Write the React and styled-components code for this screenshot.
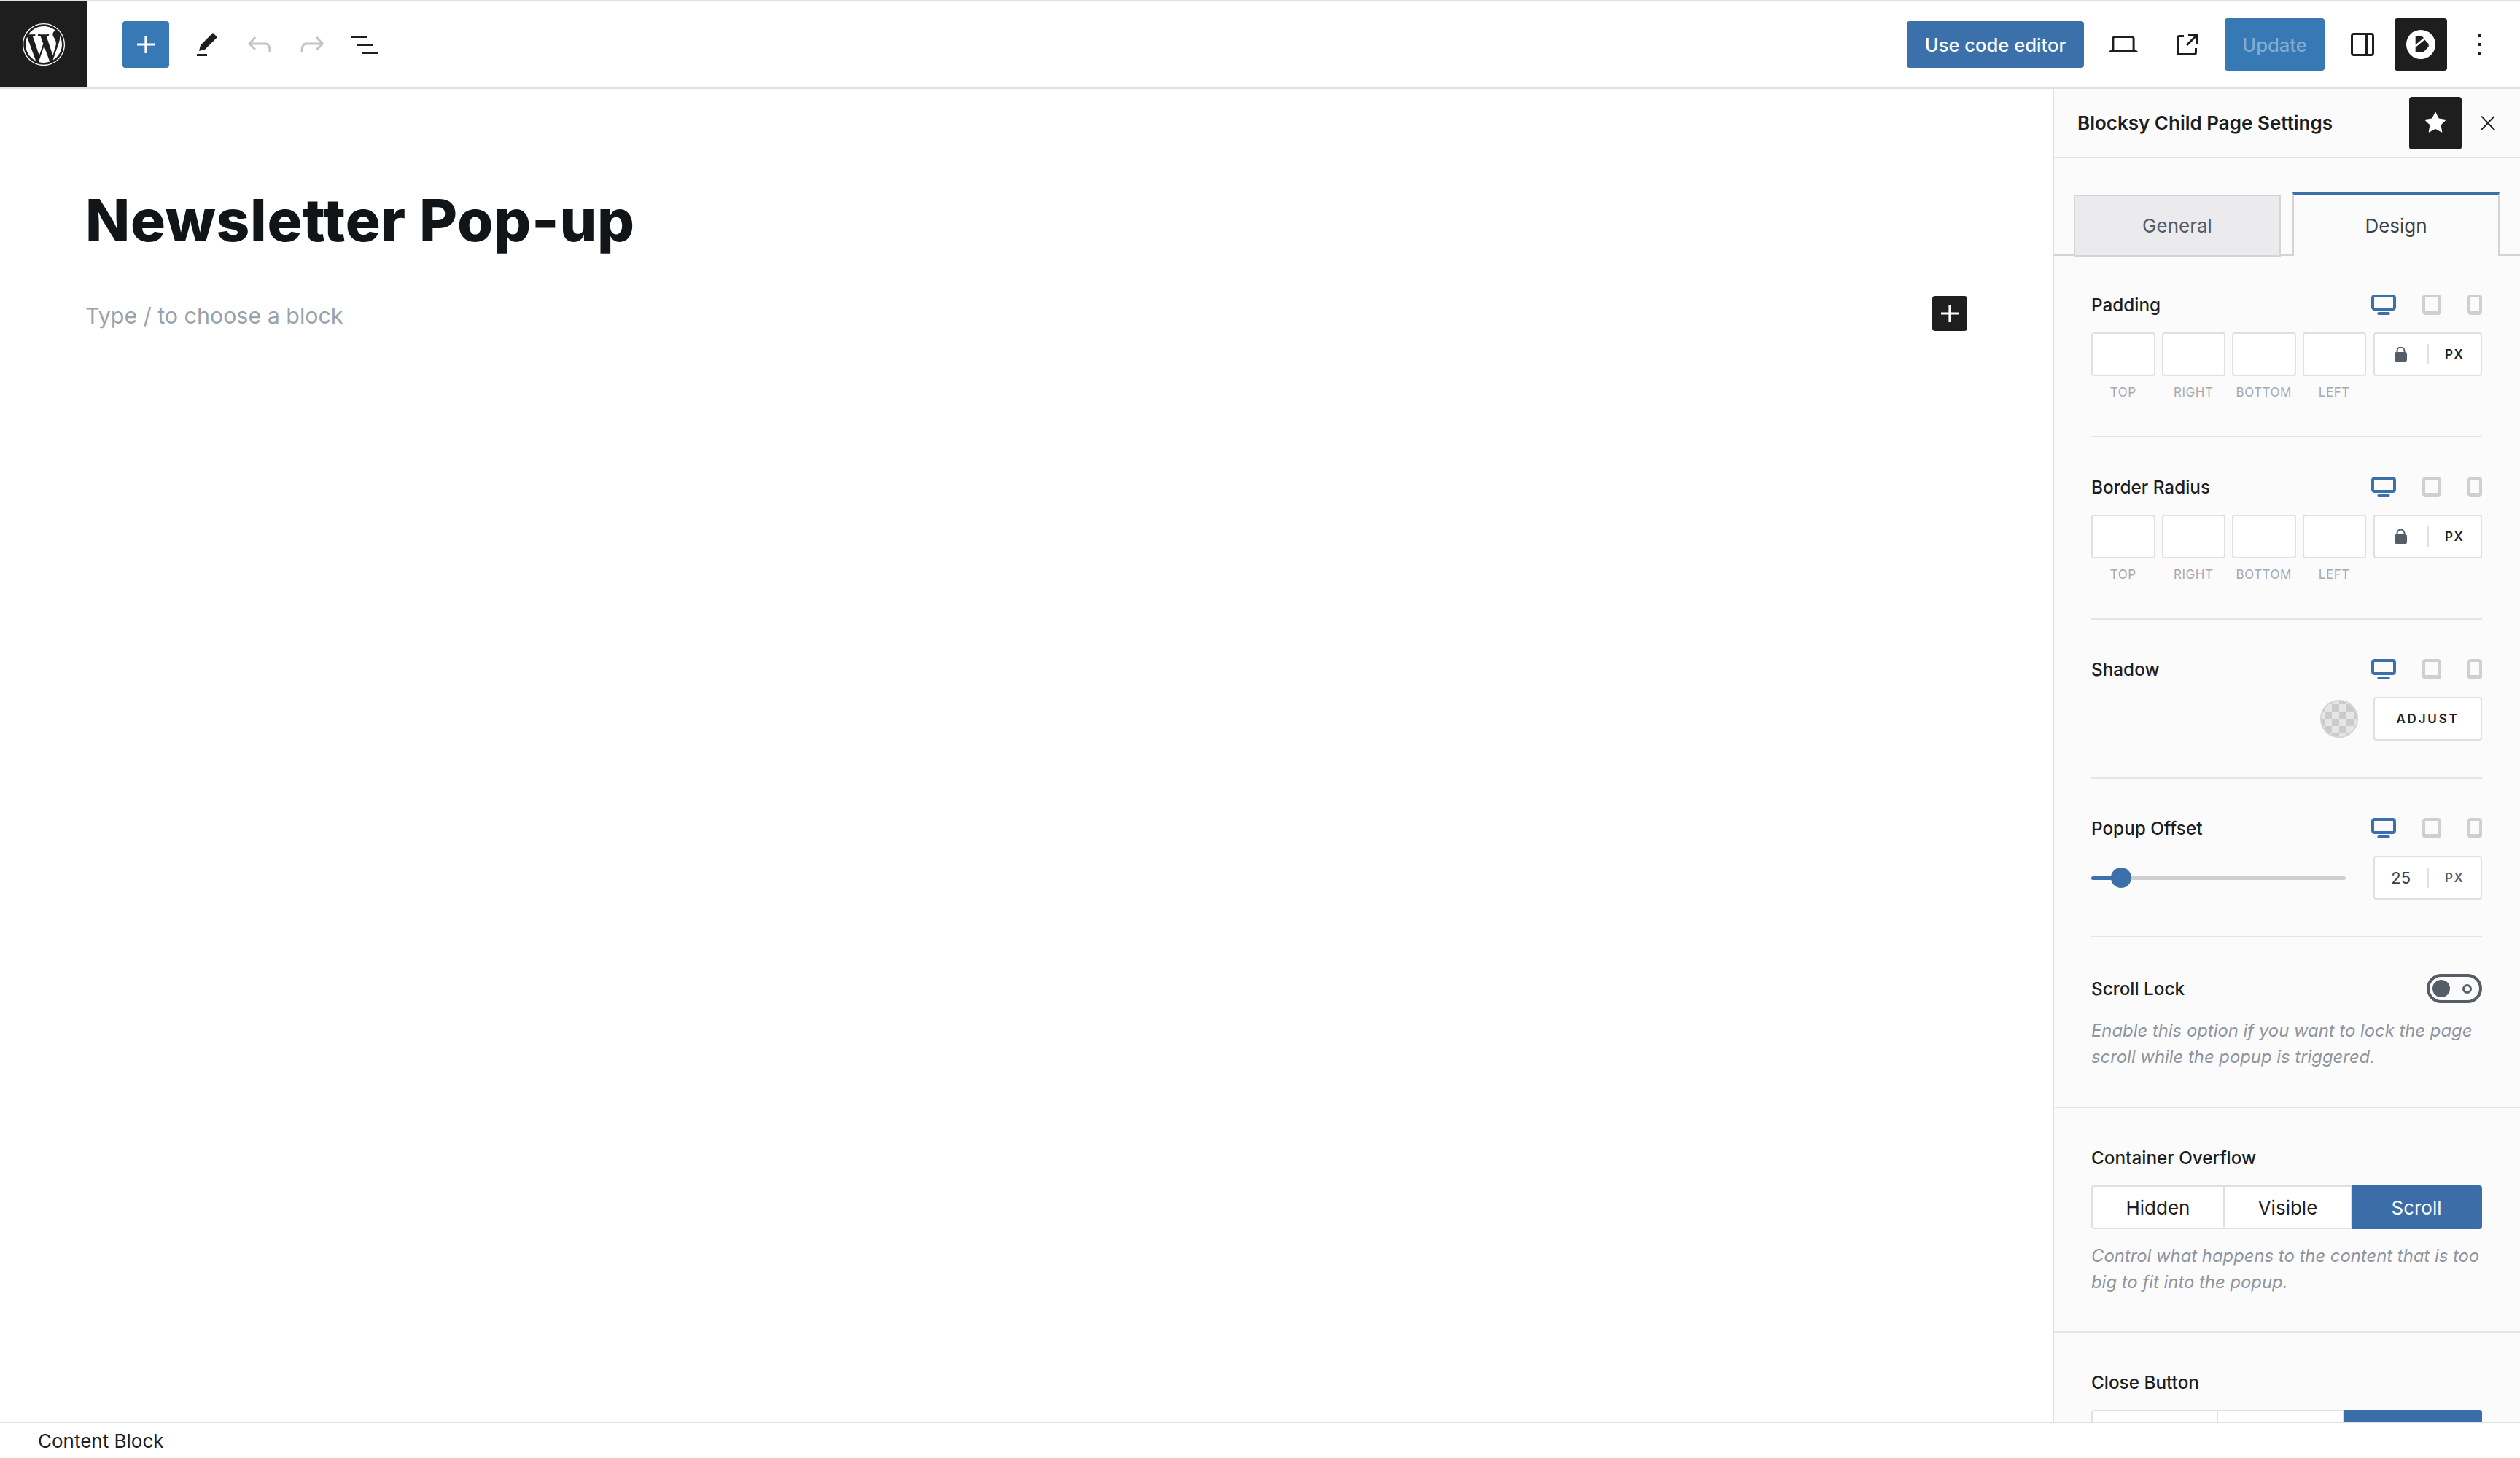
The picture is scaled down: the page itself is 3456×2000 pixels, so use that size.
import React from "react";
import styled, { createGlobalStyle } from "styled-components";
import { FaWordpress } from "react-icons/fa";

const GlobalStyle = createGlobalStyle`
	html, body {
		margin: 0;
		padding: 0;
		background: #fff;
		overflow: hidden;
	}
	* {
		box-sizing: border-box;
	}
	body {
		font-family: Inter, "Liberation Sans", sans-serif;
		color: #1e1e1e;
	}
`;

const Page = styled.div`
	display: flex;
	flex-direction: column;
	width: 3456px;
	height: 2000px;
	overflow: hidden;
`;

/* top toolbar */
const TopBar = styled.header`
	display: flex;
	align-items: center;
	flex: none;
	height: 122px;
	background: #fff;
	border-top: 2px solid #e0e0e0;
	border-bottom: 2px solid #e0e0e0;
`;

const LogoBlock = styled.div`
	display: flex;
	align-items: center;
	justify-content: center;
	width: 120px;
	height: 100%;
	background: #1e1e1e;
	color: #fff;
`;

const ToolGroup = styled.div`
	display: flex;
	align-items: center;
	margin-left: ${(p) => (p.$right ? "auto" : "48px")};
	padding-right: ${(p) => (p.$right ? "32px" : "0")};
`;

const IconButton = styled.div`
	display: flex;
	align-items: center;
	justify-content: center;
	flex: none;
	width: 48px;
	height: 48px;
	margin-left: ${(p) => p.$ml || 0}px;
	color: ${(p) => (p.$muted ? "#c4c4c4" : "#1e1e1e")};
`;

const InserterButton = styled.div`
	display: flex;
	align-items: center;
	justify-content: center;
	width: 64px;
	height: 64px;
	border-radius: 4px;
	background: #3679b5;
	color: #fff;
`;

const CodeEditorButton = styled.div`
	display: flex;
	align-items: center;
	justify-content: center;
	width: 243px;
	height: 64px;
	border-radius: 4px;
	background: #3c70ab;
	color: #fff;
	font-size: 25.6px;
	font-weight: 500;
`;

const UpdateButton = styled.div`
	display: flex;
	align-items: center;
	justify-content: center;
	width: 137px;
	height: 72px;
	margin-left: 27px;
	border-radius: 4px;
	background: #3679b5;
	color: rgba(255, 255, 255, 0.4);
	font-size: 25.6px;
	font-weight: 500;
`;

const DarkSquare = styled.div`
	display: flex;
	align-items: center;
	justify-content: center;
	flex: none;
	width: 72px;
	height: 72px;
	margin-left: ${(p) => p.$ml || 0}px;
	border-radius: 4px;
	background: #1e1e1e;
	color: #fff;
`;

/* body */
const Main = styled.div`
	display: flex;
	flex: none;
	height: 1828px;
`;

const Editor = styled.main`
	flex: 1;
	padding: 130px 117px 0 117px;
	background: #fff;
`;

const PostTitle = styled.h1`
	margin: 0;
	font-size: 80px;
	line-height: 100px;
	font-weight: 800;
	letter-spacing: 0.7px;
	color: #111518;
`;

const BlockRow = styled.div`
	display: flex;
	align-items: center;
	justify-content: space-between;
	margin-top: 54px;
`;

const Placeholder = styled.div`
	padding-top: 6px;
	font-size: 30.4px;
	line-height: 42px;
	color: #9aa3ad;
`;

const BlockPlus = styled.div`
	display: flex;
	align-items: center;
	justify-content: center;
	width: 48px;
	height: 48px;
	border-radius: 4px;
	background: #1e1e1e;
	color: #fff;
`;

/* settings sidebar */
const Sidebar = styled.aside`
	flex: none;
	width: 641px;
	height: 100%;
	overflow: hidden;
	background: #fbfbfc;
	border-left: 2px solid #e0e0e0;
`;

const SidebarHeader = styled.div`
	display: flex;
	align-items: center;
	height: 95px;
	padding: 0 20px 0 32px;
	border-bottom: 2px solid #e0e0e0;
`;

const SidebarTitle = styled.div`
	flex: 1;
	font-size: 26px;
	font-weight: 600;
`;

const TabRow = styled.div`
	display: flex;
	gap: 16px;
	height: 134px;
	padding: 47px 0 0 27px;
	border-bottom: 2px solid #d3d4d6;
`;

const Tab = styled.div`
	display: flex;
	align-items: center;
	justify-content: center;
	width: ${(p) => (p.$active ? "284px" : "284px")};
	height: ${(p) => (p.$active ? "87px" : "85px")};
	margin-top: ${(p) => (p.$active ? "0" : "3px")};
	background: ${(p) => (p.$active ? "#fbfbfc" : "#ebebed")};
	border: 2px solid #d3d4d6;
	border-top: ${(p) => (p.$active ? "4px solid #3c70ab" : "2px solid #d3d4d6")};
	border-bottom: ${(p) => (p.$active ? "none" : "2px solid #d3d4d6")};
	color: ${(p) => (p.$active ? "#3c434a" : "#555d66")};
	font-size: 26px;
`;

const Group = styled.div`
	padding: 0 52px 0 51px;
	border-bottom: ${(p) => (p.$ruled ? "2px solid #e2e5e9" : "none")};
`;

const Option = styled.section`
	padding: ${(p) => p.$top || 54}px 0 ${(p) => p.$bottom || 50}px;
	border-bottom: ${(p) => (p.$ruled ? "2px solid #e2e5e9" : "none")};
`;

const OptionHead = styled.div`
	display: flex;
	align-items: center;
	justify-content: space-between;
	height: 28px;
`;

const OptionLabel = styled.div`
	font-size: 24.3px;
	font-weight: 500;
	color: #1e1e1e;
`;

const Devices = styled.div`
	display: flex;
	align-items: center;
	gap: 36px;
`;

const SpacingRow = styled.div`
	display: flex;
	gap: 9px;
	margin-top: 24px;
`;

const SpacingCell = styled.div`
	display: flex;
	flex-direction: column;
	align-items: center;
	width: 87.5px;
`;

const SpacingInput = styled.div`
	width: 100%;
	height: 60px;
	background: #fff;
	border: 2px solid #dfe0e2;
	border-radius: 4px;
`;

const SpacingCaption = styled.div`
	margin-top: 12px;
	font-size: 17px;
	line-height: 20px;
	letter-spacing: 0.5px;
	color: #a5a9b0;
`;

const UnitBox = styled.div`
	display: flex;
	align-items: center;
	flex: none;
	width: 149px;
	height: 60px;
	margin-left: ${(p) => p.$ml || 0}px;
	background: #fff;
	border: 2px solid #dfe0e2;
	border-radius: 4px;
`;

const UnitCell = styled.div`
	display: flex;
	align-items: center;
	justify-content: center;
	flex: 1;
	height: 28px;
	font-size: ${(p) => (p.$value ? "22px" : "17px")};
	font-weight: ${(p) => (p.$value ? 400 : 600)};
	letter-spacing: ${(p) => (p.$value ? 0 : "1.6px")};
	color: ${(p) => p.$color || "#1e1e1e"};
	& + & {
		border-left: 2px solid #dfe0e2;
	}
`;

const ShadowRow = styled.div`
	display: flex;
	align-items: center;
	justify-content: flex-end;
	gap: 21px;
	margin-top: 24px;
`;

const Swatch = styled.div`
	width: 52px;
	height: 52px;
	border: 2px solid #d5d5d5;
	border-radius: 50%;
	background: repeating-conic-gradient(#cbcbcb 0 25%, #e6e6e6 0 50%) 50% / 20px 20px;
`;

const AdjustButton = styled.div`
	display: flex;
	align-items: center;
	justify-content: center;
	width: 149px;
	height: 60px;
	background: #fff;
	border: 2px solid #dfe0e2;
	border-radius: 4px;
	font-size: 17px;
	font-weight: 600;
	letter-spacing: 2.8px;
`;

const SliderRow = styled.div`
	display: flex;
	align-items: center;
	justify-content: space-between;
	margin-top: 24px;
`;

const SliderTrack = styled.div`
	position: relative;
	width: 349px;
	height: 5px;
	border-radius: 3px;
	background: #cfcfd3;
`;

const SliderFill = styled.div`
	height: 100%;
	border-radius: 3px;
	background: #3c70ab;
`;

const SliderThumb = styled.div`
	position: absolute;
	top: -12px;
	width: 28px;
	height: 28px;
	border-radius: 50%;
	background: #3c70ab;
	transform: translateX(-50%);
`;

const ToggleHead = styled.div`
	display: flex;
	align-items: center;
	justify-content: space-between;
	height: 40px;
`;

const Toggle = styled.div`
	display: flex;
	align-items: center;
	justify-content: space-between;
	width: 76px;
	height: 40px;
	padding: 0 10px 0 4px;
	border: 4px solid #555d66;
	border-radius: 20px;
`;

const ToggleKnob = styled.div`
	width: 24px;
	height: 24px;
	border-radius: 50%;
	background: #555d66;
`;

const ToggleRing = styled.div`
	width: 13px;
	height: 13px;
	border: 3.5px solid #555d66;
	border-radius: 50%;
`;

const Hint = styled.p`
	margin: ${(p) => p.$gap}px 0 0;
	font-size: 23.85px;
	font-style: italic;
	line-height: 36px;
	color: #8f959e;
`;

const Segments = styled.div`
	display: flex;
	height: 60px;
	margin-top: 24px;
`;

const Segment = styled.div`
	display: flex;
	align-items: center;
	justify-content: center;
	flex: none;
	width: ${(p) => p.$w}px;
	background: ${(p) => (p.$active ? "#3b6ea8" : "#fff")};
	border: 2px solid ${(p) => (p.$active ? "#3b6ea8" : "#dfe0e2")};
	border-left-width: ${(p) => (p.$first ? "2px" : "0")};
	border-radius: ${(p) => (p.$first ? "4px 0 0 4px" : p.$active ? "0 4px 4px 0" : "0")};
	color: ${(p) => (p.$active ? "#fff" : "#1e1e1e")};
	font-size: 26px;
`;

const StatusBar = styled.footer`
	display: flex;
	align-items: center;
	flex: none;
	height: 50px;
	padding: 0 0 0 52px;
	background: #fff;
	border-top: 2px solid #e0e0e0;
	font-size: 26px;
	color: #1e1e1e;
`;

const Glyph = ({ d, size = 48 }) => (
	<svg width={size} height={size} viewBox="0 0 24 24" fill="currentColor">
		<path d={d} />
	</svg>
);

const ICONS = {
	plus: "M18 11.2h-5.2V6h-1.6v5.2H6v1.6h5.2V18h1.6v-5.2H18z",
	pencil: "m19 7-3-3-8.5 8.5-1 4 4-1L19 7Zm-7 11.5H5V20h7v-1.5Z",
	undo: "M18.3 11.7c-.6-.6-1.4-.9-2.3-.9H6.7l2.9-3.3-1.1-1-4.5 5L8.5 16l1-1-2.7-2.7H16c.5 0 .9.2 1.3.5 1 1 1 3.4 1 4.5v.3h1.5v-.2c0-1.5 0-4.3-1.5-5.7z",
	redo: "M15.6 6.5l-1.1 1 2.9 3.3H8c-.9 0-1.7.3-2.3.9-1.4 1.5-1.4 4.2-1.4 5.6v.2h1.5v-.3c0-1.1 0-3.5 1-4.5.3-.3.7-.5 1.3-.5h9.2L14.5 15l1.1 1.1 4.6-4.6-4.6-5z",
	list: "M3 6h11v1.5H3V6Zm3.5 5.5h11V13h-11v-1.5ZM21 17H10v1.5h11V17Z",
	laptop: "M20.5 16h-.7V8c0-1.1-.9-2-2-2H6.2c-1.1 0-2 .9-2 2v8h-.7c-.8 0-1.5.7-1.5 1.5h20c0-.8-.7-1.5-1.5-1.5zM5.7 8c0-.3.2-.5.5-.5h11.6c.3 0 .5.2.5.5v7.6H5.7V8z",
	external: "M19.5 4.5h-7V6h4.44l-5.97 5.97 1.06 1.06L18 7.06v4.44h1.5v-7Zm-13 1a2 2 0 0 0-2 2v10a2 2 0 0 0 2 2h10a2 2 0 0 0 2-2v-3H17v3a.5.5 0 0 1-.5.5h-10a.5.5 0 0 1-.5-.5v-10a.5.5 0 0 1 .5-.5h3V5.5h-3Z",
	drawer: "M18 4H6c-1.1 0-2 .9-2 2v12c0 1.1.9 2 2 2h12c1.1 0 2-.9 2-2V6c0-1.1-.9-2-2-2zm-4 14.5H6c-.3 0-.5-.2-.5-.5V6c0-.3.2-.5.5-.5h8v13zm4.5-.5c0 .3-.2.5-.5.5h-2.5v-13H18c.3 0 .5.2.5.5v12z",
	more: "M13 19h-2v-2h2v2zm0-6h-2v-2h2v2zm0-6h-2V5h2v2z",
	star: "M11.776 4.454a.25.25 0 01.448 0l2.069 4.192a.25.25 0 00.188.137l4.626.672a.25.25 0 01.139.426l-3.348 3.263a.25.25 0 00-.072.222l.79 4.607a.25.25 0 01-.362.263l-4.138-2.175a.25.25 0 00-.232 0l-4.138 2.175a.25.25 0 01-.363-.263l.79-4.607a.25.25 0 00-.071-.222L4.754 9.881a.25.25 0 01.139-.426l4.626-.672a.25.25 0 00.188-.137l2.069-4.192z",
	close: "M13 11.8l6.1-6.3-1-1-6.1 6.2-6.1-6.2-1 1 6.1 6.3-6.5 6.7 1 1 6.5-6.6 6.5 6.6 1-1z",
};

const BlocksyMark = () => (
	<svg width="40" height="40" viewBox="0 0 40 40">
		<circle cx="20" cy="20" r="20" fill="#fff" />
		<path d="M12.7 8.3H21l3 2.7-11.3 9.5z" fill="#1e1e1e" />
		<path d="M12.7 24l12.6-10.5 5.4 5.8V23l-7.2 7.7H12.7z" fill="#1e1e1e" />
	</svg>
);

const DeviceIcons = () => (
	<Devices>
		<svg width="34" height="28" viewBox="0 0 34 28">
			<rect x="2" y="2" width="30" height="18" rx="2.5" fill="none" stroke="#3c70ab" strokeWidth="4" />
			<rect x="8.5" y="24" width="17" height="4" rx="1.5" fill="#3c70ab" />
		</svg>
		<svg width="26" height="28" viewBox="0 0 26 28">
			<rect x="2" y="2" width="22" height="24" rx="2.5" fill="none" stroke="#cfcfcf" strokeWidth="4" />
			<rect x="2" y="22" width="22" height="4" fill="#cfcfcf" />
		</svg>
		<svg width="20" height="28" viewBox="0 0 20 28">
			<rect x="2" y="2" width="16" height="24" rx="2.5" fill="none" stroke="#cfcfcf" strokeWidth="4" />
			<rect x="2" y="22" width="16" height="4" fill="#cfcfcf" />
		</svg>
	</Devices>
);

const LockIcon = () => (
	<svg width="17" height="20" viewBox="0 0 17 20">
		<path d="M3.5 8V5.5a5 5 0 0 1 10 0V8" fill="none" stroke="#555d66" strokeWidth="2" />
		<rect x="0" y="7" width="17" height="13" rx="2.5" fill="#555d66" />
	</svg>
);

const SIDES = ["TOP", "RIGHT", "BOTTOM", "LEFT"];

const SpacingOption = ({ label, top }) => (
	<Option $ruled $top={top}>
		<OptionHead>
			<OptionLabel>{label}</OptionLabel>
			<DeviceIcons />
		</OptionHead>
		<SpacingRow>
			{SIDES.map((side) => (
				<SpacingCell key={side}>
					<SpacingInput />
					<SpacingCaption>{side}</SpacingCaption>
				</SpacingCell>
			))}
			<UnitBox $ml={1}>
				<UnitCell>
					<LockIcon />
				</UnitCell>
				<UnitCell>PX</UnitCell>
			</UnitBox>
		</SpacingRow>
	</Option>
);

const SegmentGroup = ({ items }) => (
	<Segments>
		{items.map((item, i) => (
			<Segment key={i} $w={item.w} $first={i === 0} $active={i === items.length - 1}>
				{item.label}
			</Segment>
		))}
	</Segments>
);

export default function App() {
	const sliderPos = 37;

	return (
		<Page>
			<GlobalStyle />
			<TopBar>
				<LogoBlock>
					<FaWordpress size={60} />
				</LogoBlock>
				<ToolGroup>
					<InserterButton>
						<Glyph d={ICONS.plus} />
					</InserterButton>
					<IconButton $ml={28}>
						<Glyph d={ICONS.pencil} />
					</IconButton>
					<IconButton $ml={24} $muted>
						<Glyph d={ICONS.undo} />
					</IconButton>
					<IconButton $ml={24} $muted>
						<Glyph d={ICONS.redo} />
					</IconButton>
					<IconButton $ml={24}>
						<Glyph d={ICONS.list} />
					</IconButton>
				</ToolGroup>
				<ToolGroup $right>
					<CodeEditorButton>Use code editor</CodeEditorButton>
					<IconButton $ml={30}>
						<Glyph d={ICONS.laptop} />
					</IconButton>
					<IconButton $ml={40}>
						<Glyph d={ICONS.external} />
					</IconButton>
					<UpdateButton>Update</UpdateButton>
					<IconButton $ml={28}>
						<Glyph d={ICONS.drawer} />
					</IconButton>
					<DarkSquare $ml={20}>
						<BlocksyMark />
					</DarkSquare>
					<IconButton $ml={20}>
						<Glyph d={ICONS.more} />
					</IconButton>
				</ToolGroup>
			</TopBar>

			<Main>
				<Editor>
					<PostTitle>Newsletter Pop-up</PostTitle>
					<BlockRow>
						<Placeholder>Type / to choose a block</Placeholder>
						<BlockPlus>
							<Glyph d={ICONS.plus} size={48} />
						</BlockPlus>
					</BlockRow>
				</Editor>

				<Sidebar>
					<SidebarHeader>
						<SidebarTitle>Blocksy Child Page Settings</SidebarTitle>
						<DarkSquare>
							<Glyph d={ICONS.star} />
						</DarkSquare>
						<IconButton $ml={12}>
							<Glyph d={ICONS.close} size={32} />
						</IconButton>
					</SidebarHeader>
					<TabRow>
						<Tab>General</Tab>
						<Tab $active>Design</Tab>
					</TabRow>

					<Group $ruled>
						<SpacingOption label="Padding" top={53} />
						<SpacingOption label="Border Radius" />
						<Option $ruled>
							<OptionHead>
								<OptionLabel>Shadow</OptionLabel>
								<DeviceIcons />
							</OptionHead>
							<ShadowRow>
								<Swatch />
								<AdjustButton>ADJUST</AdjustButton>
							</ShadowRow>
						</Option>
						<Option $ruled>
							<OptionHead>
								<OptionLabel>Popup Offset</OptionLabel>
								<DeviceIcons />
							</OptionHead>
							<SliderRow>
								<SliderTrack>
									<SliderFill style={{ width: `${sliderPos}px` }} />
									<SliderThumb style={{ left: `${sliderPos + 4}px` }} />
								</SliderTrack>
								<UnitBox>
									<UnitCell $value $color="#3c434a">
										25
									</UnitCell>
									<UnitCell $color="#555d66">PX</UnitCell>
								</UnitBox>
							</SliderRow>
						</Option>
						<Option $top={50}>
							<ToggleHead>
								<OptionLabel>Scroll Lock</OptionLabel>
								<Toggle>
									<ToggleKnob />
									<ToggleRing />
								</Toggle>
							</ToggleHead>
							<Hint $gap={20}>
								Enable this option if you want to lock the page scroll while the popup is triggered.
							</Hint>
						</Option>
					</Group>

					<Group $ruled>
						<Option $bottom={49}>
							<OptionHead>
								<OptionLabel>Container Overflow</OptionLabel>
							</OptionHead>
							<SegmentGroup
								items={[
									{ label: "Hidden", w: 183 },
									{ label: "Visible", w: 175 },
									{ label: "Scroll", w: 178 },
								]}
							/>
							<Hint $gap={19}>
								Control what happens to the content that is too big to fit into the popup.
							</Hint>
						</Option>
					</Group>

					<Group>
						<Option>
							<OptionHead>
								<OptionLabel>Close Button</OptionLabel>
							</OptionHead>
							<SegmentGroup
								items={[
									{ label: "", w: 174 },
									{ label: "", w: 173 },
									{ label: "", w: 189 },
								]}
							/>
						</Option>
					</Group>
				</Sidebar>
			</Main>

			<StatusBar>Content Block</StatusBar>
		</Page>
	);
}
